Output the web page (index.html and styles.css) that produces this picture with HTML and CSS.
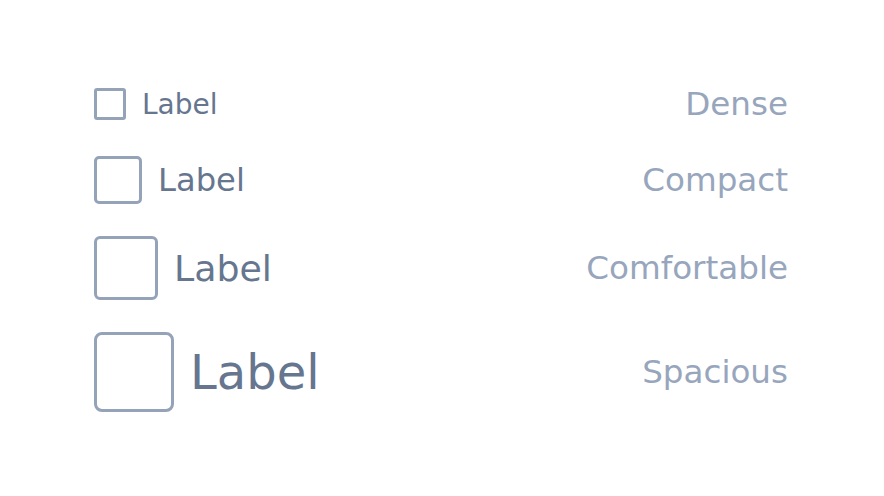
FILE: index.html
```html
<!DOCTYPE html>
<html lang="en">
<head>
<meta charset="utf-8">
<title>Checkbox sizes</title>
<link rel="stylesheet" href="styles.css">
</head>
<body>
<main class="list">
  <div class="row row-dense">
    <label class="check">
      <span class="box"></span>
      <span class="label">Label</span>
    </label>
    <span class="size">Dense</span>
  </div>
  <div class="row row-compact">
    <label class="check">
      <span class="box"></span>
      <span class="label">Label</span>
    </label>
    <span class="size">Compact</span>
  </div>
  <div class="row row-comfortable">
    <label class="check">
      <span class="box"></span>
      <span class="label">Label</span>
    </label>
    <span class="size">Comfortable</span>
  </div>
  <div class="row row-spacious">
    <label class="check">
      <span class="box"></span>
      <span class="label">Label</span>
    </label>
    <span class="size">Spacious</span>
  </div>
</main>
</body>
</html>
```
FILE: styles.css
```css
* { box-sizing: border-box; }
html, body { margin: 0; padding: 0; background: #ffffff; }
body {
  width: 884px;
  height: 496px;
  font-family: "DejaVu Sans", "Liberation Sans", sans-serif;
  display: flex;
  flex-direction: column;
  justify-content: center;
  padding: 0 96px 0 94px;
}
.list {
  display: flex;
  flex-direction: column;
  gap: 32px;
}
.row {
  display: flex;
  align-items: center;
  justify-content: space-between;
}
.check {
  display: flex;
  align-items: center;
  gap: 16px;
}
.box {
  display: block;
  border: 3px solid #94a3b8;
  background: #fff;
  flex: none;
}
.label {
  color: #66768f;
  line-height: normal;
}
.size {
  color: #97a6bc;
  font-size: 32.6px;
  line-height: normal;
}
.row-dense { min-height: 40px; }
.row-dense .box { width: 32px; height: 32px; border-radius: 3px; }
.row-dense .label { font-size: 28px; }
.row-compact .box { width: 48px; height: 48px; border-radius: 5px; }
.row-compact .label { font-size: 32.2px; }
.row-comfortable .box { width: 64px; height: 64px; border-radius: 6px; }
.row-comfortable .label { font-size: 36.3px; }
.row-spacious .box { width: 80px; height: 80px; border-radius: 8px; }
.row-spacious .label { font-size: 48px; }
```
